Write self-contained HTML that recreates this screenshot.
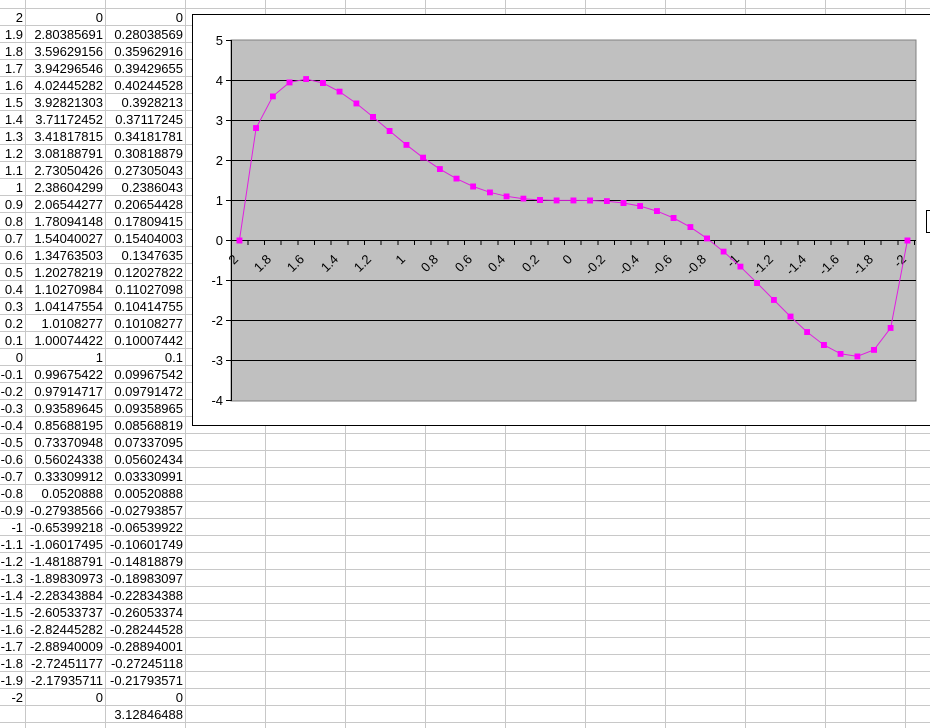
<!DOCTYPE html>
<html><head><meta charset="utf-8"><style>
html,body{margin:0;padding:0;background:#fff;width:930px;height:728px;overflow:hidden}
svg{display:block}
text{font-family:"Liberation Sans",Arial,sans-serif;font-size:13px;fill:#000}
</style></head><body>
<svg width="930" height="728" viewBox="0 0 930 728" xmlns="http://www.w3.org/2000/svg">
<g stroke="#c8c8c8" stroke-width="1" shape-rendering="crispEdges">
<path d="M0 8.5H930M0 25.5H930M0 42.5H930M0 59.5H930M0 76.5H930M0 93.5H930M0 110.5H930M0 127.5H930M0 144.5H930M0 161.5H930M0 178.5H930M0 195.5H930M0 212.5H930M0 229.5H930M0 246.5H930M0 263.5H930M0 280.5H930M0 297.5H930M0 314.5H930M0 331.5H930M0 348.5H930M0 365.5H930M0 382.5H930M0 399.5H930M0 416.5H930M0 433.5H930M0 450.5H930M0 467.5H930M0 484.5H930M0 501.5H930M0 518.5H930M0 535.5H930M0 552.5H930M0 569.5H930M0 586.5H930M0 603.5H930M0 620.5H930M0 637.5H930M0 654.5H930M0 671.5H930M0 688.5H930M0 705.5H930M0 722.5H930"/>
<path d="M25.5 0V728M105.5 0V728M185.5 0V728M265.5 0V728M345.5 0V728M425.5 0V728M505.5 0V728M585.5 0V728M665.5 0V728M745.5 0V728M825.5 0V728M905.5 0V728"/>
</g>
<g text-anchor="end">
<g transform="translate(23,0)">
<text y="22">2</text><text y="39">1.9</text><text y="56">1.8</text><text y="73">1.7</text><text y="90">1.6</text><text y="107">1.5</text><text y="124">1.4</text><text y="141">1.3</text><text y="158">1.2</text><text y="175">1.1</text><text y="192">1</text><text y="209">0.9</text><text y="226">0.8</text><text y="243">0.7</text><text y="260">0.6</text><text y="277">0.5</text><text y="294">0.4</text><text y="311">0.3</text><text y="328">0.2</text><text y="345">0.1</text><text y="362">0</text><text y="379">-0.1</text><text y="396">-0.2</text><text y="413">-0.3</text><text y="430">-0.4</text><text y="447">-0.5</text><text y="464">-0.6</text><text y="481">-0.7</text><text y="498">-0.8</text><text y="515">-0.9</text><text y="532">-1</text><text y="549">-1.1</text><text y="566">-1.2</text><text y="583">-1.3</text><text y="600">-1.4</text><text y="617">-1.5</text><text y="634">-1.6</text><text y="651">-1.7</text><text y="668">-1.8</text><text y="685">-1.9</text><text y="702">-2</text>
</g>
<g transform="translate(103,0)">
<text y="22">0</text><text y="39">2.80385691</text><text y="56">3.59629156</text><text y="73">3.94296546</text><text y="90">4.02445282</text><text y="107">3.92821303</text><text y="124">3.71172452</text><text y="141">3.41817815</text><text y="158">3.08188791</text><text y="175">2.73050426</text><text y="192">2.38604299</text><text y="209">2.06544277</text><text y="226">1.78094148</text><text y="243">1.54040027</text><text y="260">1.34763503</text><text y="277">1.20278219</text><text y="294">1.10270984</text><text y="311">1.04147554</text><text y="328">1.0108277</text><text y="345">1.00074422</text><text y="362">1</text><text y="379">0.99675422</text><text y="396">0.97914717</text><text y="413">0.93589645</text><text y="430">0.85688195</text><text y="447">0.73370948</text><text y="464">0.56024338</text><text y="481">0.33309912</text><text y="498">0.0520888</text><text y="515">-0.27938566</text><text y="532">-0.65399218</text><text y="549">-1.06017495</text><text y="566">-1.48188791</text><text y="583">-1.89830973</text><text y="600">-2.28343884</text><text y="617">-2.60533737</text><text y="634">-2.82445282</text><text y="651">-2.88940009</text><text y="668">-2.72451177</text><text y="685">-2.17935711</text><text y="702">0</text>
</g>
<g transform="translate(183,0)">
<text y="22">0</text><text y="39">0.28038569</text><text y="56">0.35962916</text><text y="73">0.39429655</text><text y="90">0.40244528</text><text y="107">0.3928213</text><text y="124">0.37117245</text><text y="141">0.34181781</text><text y="158">0.30818879</text><text y="175">0.27305043</text><text y="192">0.2386043</text><text y="209">0.20654428</text><text y="226">0.17809415</text><text y="243">0.15404003</text><text y="260">0.1347635</text><text y="277">0.12027822</text><text y="294">0.11027098</text><text y="311">0.10414755</text><text y="328">0.10108277</text><text y="345">0.10007442</text><text y="362">0.1</text><text y="379">0.09967542</text><text y="396">0.09791472</text><text y="413">0.09358965</text><text y="430">0.08568819</text><text y="447">0.07337095</text><text y="464">0.05602434</text><text y="481">0.03330991</text><text y="498">0.00520888</text><text y="515">-0.02793857</text><text y="532">-0.06539922</text><text y="549">-0.10601749</text><text y="566">-0.14818879</text><text y="583">-0.18983097</text><text y="600">-0.22834388</text><text y="617">-0.26053374</text><text y="634">-0.28244528</text><text y="651">-0.28894001</text><text y="668">-0.27245118</text><text y="685">-0.21793571</text><text y="702">0</text><text y="719">3.12846488</text>
</g>
</g>
<rect x="192.5" y="14.5" width="745" height="411" fill="#fff" stroke="#000" shape-rendering="crispEdges"/>
<rect x="926.5" y="210.5" width="10" height="22" fill="#fff" stroke="#000" shape-rendering="crispEdges"/>
<rect x="231" y="40" width="685" height="361" fill="#c0c0c0" stroke="#808080" shape-rendering="crispEdges"/>
<g stroke="#000" shape-rendering="crispEdges">
<path d="M231 80.5H916M231 120.5H916M231 160.5H916M231 200.5H916M231 240.5H916M231 280.5H916M231 320.5H916M231 360.5H916"/>
<path d="M231.5 40V401M226 40.5H231M226 80.5H231M226 120.5H231M226 160.5H231M226 200.5H231M226 240.5H231M226 280.5H231M226 320.5H231M226 360.5H231M226 400.5H231"/>
<path d="M248 240V245M264.5 240V245M281 240V245M298 240V245M314.5 240V245M331 240V245M348 240V245M364.5 240V245M381 240V245M398 240V245M414.5 240V245M431 240V245M448 240V245M464.5 240V245M481 240V245M498 240V245M514.5 240V245M531 240V245M548 240V245M564.5 240V245M581 240V245M598 240V245M614.5 240V245M631 240V245M648 240V245M664.5 240V245M681 240V245M698 240V245M714.5 240V245M731 240V245M748 240V245M764.5 240V245M781 240V245M798 240V245M814.5 240V245M831 240V245M848 240V245M864.5 240V245M881 240V245M898 240V245M914.5 240V245"/>
</g>
<g text-anchor="end">
<text x="223" y="45">5</text><text x="223" y="85">4</text><text x="223" y="125">3</text><text x="223" y="165">2</text><text x="223" y="205">1</text><text x="223" y="245">0</text><text x="223" y="285">-1</text><text x="223" y="325">-2</text><text x="223" y="365">-3</text><text x="223" y="405">-4</text>
</g>
<g text-anchor="end" font-size="13">
<text transform="translate(239,260) rotate(-45)">2</text>
<text transform="translate(272,260) rotate(-45)">1.8</text>
<text transform="translate(305,260) rotate(-45)">1.6</text>
<text transform="translate(339,260) rotate(-45)">1.4</text>
<text transform="translate(372,260) rotate(-45)">1.2</text>
<text transform="translate(406,260) rotate(-45)">1</text>
<text transform="translate(439,260) rotate(-45)">0.8</text>
<text transform="translate(473,260) rotate(-45)">0.6</text>
<text transform="translate(506,260) rotate(-45)">0.4</text>
<text transform="translate(540,260) rotate(-45)">0.2</text>
<text transform="translate(573,260) rotate(-45)">0</text>
<text transform="translate(606,260) rotate(-45)">-0.2</text>
<text transform="translate(640,260) rotate(-45)">-0.4</text>
<text transform="translate(673,260) rotate(-45)">-0.6</text>
<text transform="translate(707,260) rotate(-45)">-0.8</text>
<text transform="translate(740,260) rotate(-45)">-1</text>
<text transform="translate(774,260) rotate(-45)">-1.2</text>
<text transform="translate(807,260) rotate(-45)">-1.4</text>
<text transform="translate(840,260) rotate(-45)">-1.6</text>
<text transform="translate(874,260) rotate(-45)">-1.8</text>
<text transform="translate(907,260) rotate(-45)">-2</text>
</g>
<defs><marker id="m" markerWidth="6" markerHeight="6" refX="3" refY="3" markerUnits="userSpaceOnUse"><rect width="6" height="6" fill="#ff00ff"/></marker></defs>
<polyline fill="none" stroke="#e020e0" stroke-width="1" marker-start="url(#m)" marker-mid="url(#m)" marker-end="url(#m)" points="239.4,240.5 256.1,128.1 272.8,96.3 289.5,82.4 306.2,79.1 322.9,83 339.6,91.7 356.3,103.4 373,116.9 389.7,131 406.4,144.8 423.1,157.7 439.8,169.1 456.5,178.7 473.2,186.5 489.9,192.3 506.6,196.3 523.3,198.7 540,200 556.7,200.4 573.4,200.4 590.1,200.5 606.8,201.2 623.5,203 640.2,206.1 656.9,211.1 673.6,218 690.3,227.1 707,238.4 723.7,251.7 740.4,266.7 757.1,283 773.8,299.9 790.5,316.6 807.2,332.1 823.9,345 840.6,353.8 857.3,356.4 874,349.8 890.7,327.9 907.4,240.5"/>
</svg>
</body></html>
